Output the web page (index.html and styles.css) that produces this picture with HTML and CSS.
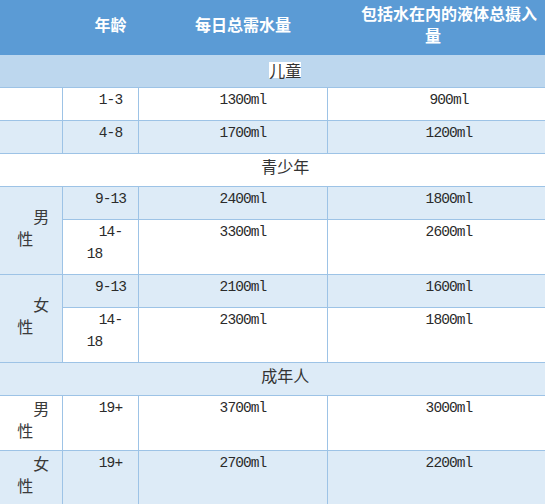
FILE: index.html
```html
<!DOCTYPE html>
<html lang="zh">
<head>
<meta charset="utf-8">
<title>每日需水量</title>
<link rel="stylesheet" href="styles.css">
</head>
<body>
<table class="water">
  <colgroup>
    <col class="c1"><col class="c2"><col class="c3"><col class="c4">
  </colgroup>
  <thead>
    <tr class="head">
      <th></th>
      <th>年龄</th>
      <th>每日总需水量</th>
      <th>包括水在内的液体总摄入量</th>
    </tr>
  </thead>
  <tbody>
    <tr class="group dark"><td colspan="4"><span class="hl">儿童</span></td></tr>
    <tr><td></td><td class="n">1-3</td><td class="n">1300ml</td><td class="n">900ml</td></tr>
    <tr class="alt"><td></td><td class="n">4-8</td><td class="n">1700ml</td><td class="n">1200ml</td></tr>
    <tr class="group"><td colspan="4">青少年</td></tr>
    <tr class="alt"><td rowspan="2" class="sex">男性</td><td class="n">9-13</td><td class="n">2400ml</td><td class="n">1800ml</td></tr>
    <tr><td class="n">14-<wbr>18</td><td class="n">3300ml</td><td class="n">2600ml</td></tr>
    <tr class="alt"><td rowspan="2" class="sex">女性</td><td class="n">9-13</td><td class="n">2100ml</td><td class="n">1600ml</td></tr>
    <tr><td class="n">14-<wbr>18</td><td class="n">2300ml</td><td class="n">1800ml</td></tr>
    <tr class="group alt"><td colspan="4">成年人</td></tr>
    <tr><td class="sex">男性</td><td class="n">19+</td><td class="n">3700ml</td><td class="n">3000ml</td></tr>
    <tr class="alt"><td class="sex">女性</td><td class="n">19+</td><td class="n">2700ml</td><td class="n">2200ml</td></tr>
  </tbody>
</table>
</body>
</html>
```
FILE: styles.css
```css
html, body {
  margin: 0;
  padding: 0;
  background: #ffffff;
}

.water {
  border-collapse: collapse;
  table-layout: fixed;
  width: 550px;
  font-family: "Noto Sans CJK SC", "Liberation Sans", sans-serif;
  font-size: 16px;
  line-height: 22px;
  color: #333333;
}

.c1 { width: 62px; }
.c2 { width: 76px; }
.c3 { width: 189px; }
.c4 { width: 223px; }

.water th,
.water td {
  text-align: center;
  text-indent: 32px;
  padding: 1px 11px 9px 0;
  vertical-align: top;
}

.water td {
  border: 1px solid #9dc3e6;
}

.water tr > td:first-child {
  border-left: none;
}

.head {
  background: #5b9bd5;
}

.head th {
  color: #ffffff;
  font-weight: bold;
  padding: 2px 11px 9px 0;
  vertical-align: middle;
  border: none;
}

.alt { background: #ddebf7; }
.dark { background: #bdd7ee; }

.group td {
  border-top: none;
}

.hl {
  display: inline-block;
  background: #ffffff;
  line-height: 16px;
  vertical-align: middle;
  text-indent: 0;
}

.n {
  font-family: "Liberation Mono", monospace;
  font-size: 14.5px;
  letter-spacing: -0.9px;
  color: #2b2b2b;
}

.sex {
  vertical-align: middle !important;
  color: #3a3a3a;
}
```
